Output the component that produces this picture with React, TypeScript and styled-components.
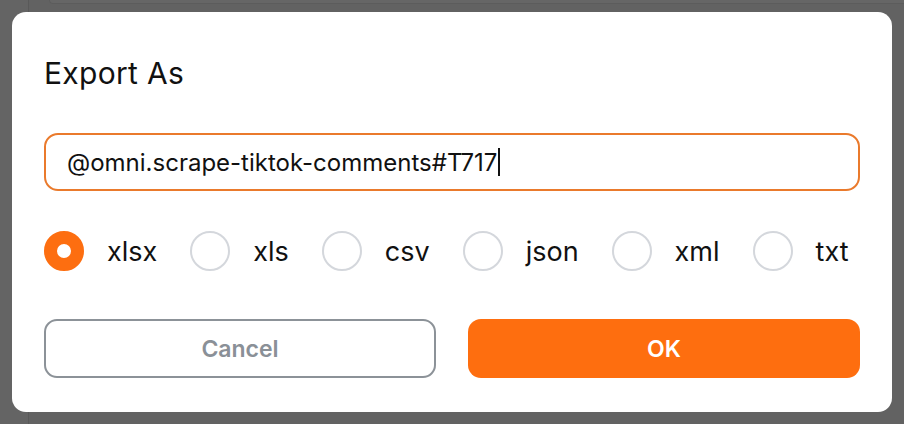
import React, { useState } from "react";
import styled, { createGlobalStyle } from "styled-components";

const FORMATS = ["xlsx", "xls", "csv", "json", "xml", "txt"];

const GlobalStyle = createGlobalStyle`
  html, body {
    margin: 0;
    padding: 0;
    width: 904px;
    height: 424px;
    overflow: hidden;
    font-family: Inter, "Noto Sans", sans-serif;
  }
  * {
    box-sizing: border-box;
  }
`;

const App: React.FC = () => {
  const [format, setFormat] = useState("xlsx");
  const fileName = "@omni.scrape-tiktok-comments#T717";

  return (
    <Page>
      <GlobalStyle />
      <Sidebar />
      <Main>
        <TopCard />
      </Main>
      <Overlay>
        <Dialog>
          <Title>Export As</Title>
          <Field>
            <FieldText>{fileName}</FieldText>
            <Caret />
          </Field>
          <FormatRow>
            {FORMATS.map((f) => (
              <FormatOption key={f} onClick={() => setFormat(f)}>
                <Radio $checked={format === f} />
                <FormatLabel>{f}</FormatLabel>
              </FormatOption>
            ))}
          </FormatRow>
          <Actions>
            <CancelButton>Cancel</CancelButton>
            <OkButton>OK</OkButton>
          </Actions>
        </Dialog>
      </Overlay>
    </Page>
  );
};

export default App;

const Page = styled.div`
  position: relative;
  width: 904px;
  height: 424px;
  display: flex;
  background: #f6f6f6;
`;

const Sidebar = styled.div`
  width: 29px;
  background: #fbfbfb;
  border-right: 1px solid #dedede;
`;

const Main = styled.div`
  flex: 1;
  padding-left: 20px;
`;

const TopCard = styled.div`
  height: 4px;
  background: #ffffff;
  border-bottom: 1px solid #e6e6e6;
  border-left: 1px solid #e6e6e6;
  border-bottom-left-radius: 8px;
`;

// modal backdrop over the page
const Overlay = styled.div`
  position: absolute;
  inset: 0;
  background: rgba(0, 0, 0, 0.6);
  padding: 12px;
  display: flex;
  align-items: flex-start;
`;

const Dialog = styled.div`
  width: 880px;
  height: 400px;
  background: #ffffff;
  border-radius: 14px;
  padding: 44px 32px 32px 32px;
  display: flex;
  flex-direction: column;
`;

const Title = styled.h2`
  margin: 0;
  font-size: 30px;
  line-height: 34px;
  font-weight: 400;
  color: #111111;
  letter-spacing: 0.3px;
`;

const Field = styled.div`
  margin-top: 43px;
  height: 58px;
  border: 2px solid #ea7a2c;
  border-radius: 14px;
  padding: 0 21px;
  display: flex;
  align-items: center;
`;

const FieldText = styled.span`
  font-size: 24px;
  color: #111111;
  white-space: nowrap;
`;

const Caret = styled.span`
  width: 2px;
  height: 28px;
  margin-left: 1px;
  background: #111111;
`;

const FormatRow = styled.div`
  margin-top: 40px;
  display: flex;
  align-items: center;
  gap: 33px;
`;

const FormatOption = styled.label`
  display: flex;
  align-items: center;
  gap: 23px;
  cursor: pointer;
`;

const Radio = styled.span<{ $checked: boolean }>`
  width: 40px;
  height: 40px;
  border-radius: 50%;
  background: #ffffff;
  border: ${(p) => (p.$checked ? "13px solid #fd6e10" : "2px solid #d4d7dc")};
`;

const FormatLabel = styled.span`
  font-size: 27px;
  color: #111111;
`;

const Actions = styled.div`
  margin-top: 48px;
  display: grid;
  grid-template-columns: 1fr 1fr;
  gap: 32px;
`;

const BaseButton = styled.button`
  height: 59px;
  border-radius: 13px;
  font-family: Inter, "Noto Sans", sans-serif;
  font-size: 23px;
  font-weight: 600;
  cursor: pointer;
`;

const CancelButton = styled(BaseButton)`
  background: #ffffff;
  border: 2px solid #8c9298;
  color: #8a9097;
`;

const OkButton = styled(BaseButton)`
  background: #fe6e0f;
  border: none;
  color: #ffffff;
`;
